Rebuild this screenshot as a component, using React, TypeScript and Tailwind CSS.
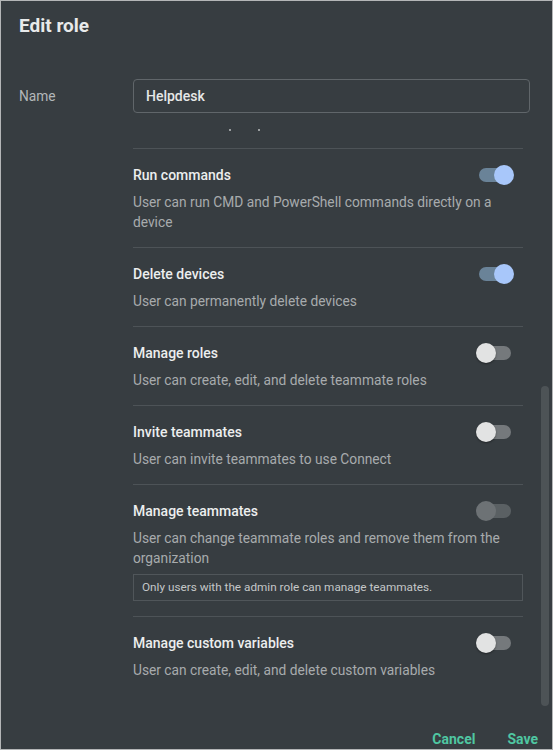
import React from "react";

type Perm = {
  title: string;
  desc: string;
  state: "on" | "off" | "disabled";
  note?: string;
};

const perms: Perm[] = [
  { title: "Run commands", desc: "User can run CMD and PowerShell commands directly on a device", state: "on" },
  { title: "Delete devices", desc: "User can permanently delete devices", state: "on" },
  { title: "Manage roles", desc: "User can create, edit, and delete teammate roles", state: "off" },
  { title: "Invite teammates", desc: "User can invite teammates to use Connect", state: "off" },
  {
    title: "Manage teammates",
    desc: "User can change teammate roles and remove them from the organization",
    state: "disabled",
    note: "Only users with the admin role can manage teammates.",
  },
  { title: "Manage custom variables", desc: "User can create, edit, and delete custom variables", state: "off" },
];

function Toggle({ state }: { state: Perm["state"] }) {
  if (state === "on") {
    return (
      <div className="relative w-[38px] h-[20px] shrink-0">
        <div className="absolute left-[3px] top-[3px] w-[32px] h-[14px] rounded-full bg-[#6a8398]" />
        <div className="absolute right-0 top-0 w-[20px] h-[20px] rounded-full bg-[#a8c7fa]" />
      </div>
    );
  }
  if (state === "disabled") {
    return (
      <div className="relative w-[38px] h-[20px] shrink-0">
        <div className="absolute left-[3px] top-[3px] w-[32px] h-[14px] rounded-full bg-[#5a6063]" />
        <div className="absolute left-0 top-0 w-[20px] h-[20px] rounded-full bg-[#6d7275]" />
      </div>
    );
  }
  return (
    <div className="relative w-[38px] h-[20px] shrink-0">
      <div className="absolute left-[3px] top-[3px] w-[32px] h-[14px] rounded-full bg-[#75797c]" />
      <div className="absolute left-0 top-0 w-[20px] h-[20px] rounded-full bg-[#e2e3e3] shadow-[0_1px_2px_rgba(0,0,0,0.4)]" />
    </div>
  );
}

export default function App() {
  return (
    <div
      className="w-[553px] h-[750px] border border-[#b4b6b7] bg-[#373d41] flex flex-col overflow-hidden"
      style={{ fontFamily: "Roboto, 'Liberation Sans', sans-serif" }}
    >
      <div className="pl-[18px] pt-[12px] h-[36px] text-[19px] leading-[26px] font-bold text-[#e8eaea]">Edit role</div>

      <div className="flex items-center mt-[42px] pl-[18px] pr-[22px]">
        <div className="w-[114px] text-[13.75px] text-[#b3b7b9]">Name</div>
        <div className="flex-1 h-[34px] border border-[#60666a] rounded-[4px] flex items-center pl-[12px] text-[14px] font-medium text-[#e6e8e8]">
          Helpdesk
        </div>
      </div>

      <div className="relative flex-1 overflow-hidden">
        <div className="pl-[132px] pr-[29px]">
          <div className="h-[35px] relative">
            <span className="absolute left-[96px] top-[16px] w-[2px] h-[2px] bg-[#9a9ea0]" />
            <span className="absolute left-[125px] top-[16px] w-[2px] h-[2px] bg-[#9a9ea0]" />
          </div>
          {perms.map((p, i) => (
            <div key={p.title} className={`border-t border-[#4d5357] pt-[16px] ${i === perms.length - 1 ? "" : "pb-[15px]"}`}>
              <div className="flex items-center justify-between h-[20px]">
                <div className="text-[14px] leading-[20px] font-medium text-[#eceeee]">{p.title}</div>
                <div className="mr-[9px]">
                  <Toggle state={p.state} />
                </div>
              </div>
              <div className="mt-[7px] text-[13.75px] leading-[20px] text-[#a7abad] pr-[2px]">{p.desc}</div>
              {p.note && (
                <div className="mt-[6px] h-[27px] border border-[#50565a] flex items-center pl-[8px] text-[11.75px] text-[#c4c7c8]">
                  {p.note}
                </div>
              )}
            </div>
          ))}
        </div>
        <div className="absolute left-[540px] top-[273px] w-[8px] h-[320px] rounded-full bg-[#4d5356]" />
      </div>

      <div className="h-[23px] pt-[3px] flex items-center justify-end gap-[32px] pr-[14px] text-[14px] font-bold text-[#4fc7a2]">
        <span>Cancel</span>
        <span>Save</span>
      </div>
    </div>
  );
}
